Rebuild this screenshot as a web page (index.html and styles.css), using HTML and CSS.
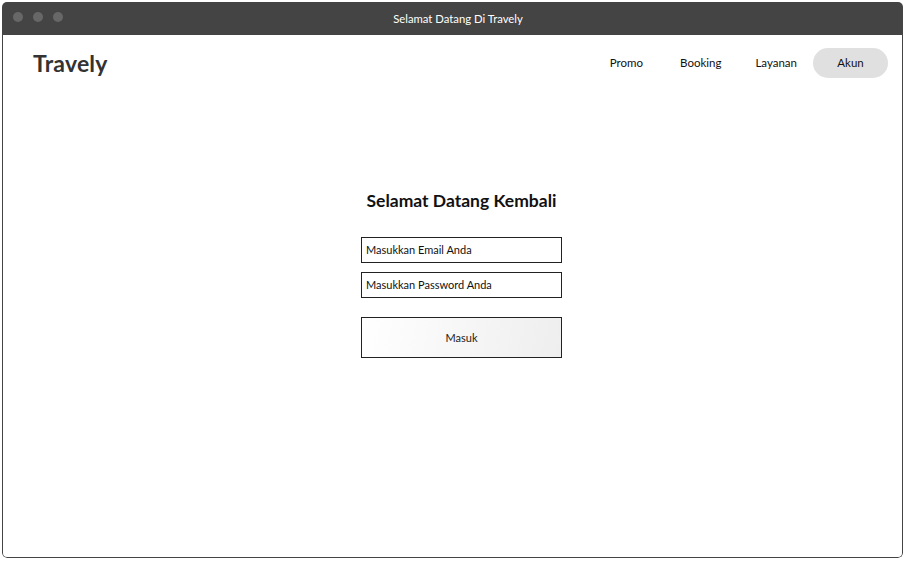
FILE: index.html
```html
<!DOCTYPE html>
<html lang="id">
<head>
<meta charset="utf-8">
<title>Selamat Datang Di Travely</title>
<link rel="stylesheet" href="styles.css">
</head>
<body>
<div class="window">
  <div class="titlebar">
    <div class="dots"><span class="dot"></span><span class="dot"></span><span class="dot"></span></div>
    <div class="title">Selamat Datang Di Travely</div>
  </div>
  <div class="content">
    <header class="header">
      <div class="logo">Travely</div>
      <nav class="nav">
        <a class="nav-link">Promo</a>
        <a class="nav-link">Booking</a>
        <a class="nav-link">Layanan</a>
        <a class="nav-link active">Akun</a>
      </nav>
    </header>
    <main class="main">
      <form class="login">
        <h1 class="heading">Selamat Datang Kembali</h1>
        <div class="field">Masukkan Email Anda</div>
        <div class="field">Masukkan Password Anda</div>
        <div class="btn">Masuk</div>
      </form>
    </main>
  </div>
</div>
</body>
</html>
```
FILE: styles.css
```css
html, body { margin: 0; padding: 0; background: #fff; }
body { font-family: "Lato", "Open Sans", sans-serif; color: #222; }
.window {
  margin: 2px 3px 3px 2px;
  height: 556px;
  display: flex;
  flex-direction: column;
  border-radius: 5px;
  overflow: hidden;
}
.titlebar {
  height: 33px;
  background: #444444;
  position: relative;
  display: flex;
  align-items: center;
  justify-content: center;
  flex: none;
}
.dots { position: absolute; left: 11px; top: 10px; display: flex; gap: 10px; }
.dot { width: 10px; height: 10px; border-radius: 50%; background: #676767; }
.title { color: #fff; font-size: 11.3px; padding-left: 11px; }
.content {
  flex: 1;
  border: 1px solid #444;
  border-top: none;
  border-radius: 0 0 5px 5px;
  display: flex;
  flex-direction: column;
}
.header {
  display: flex;
  align-items: center;
  justify-content: space-between;
  padding: 13px 14px 0 30px;
  height: 30px;
}
.logo { font-size: 23px; font-weight: 700; color: #333; letter-spacing: 0.2px; }
.nav { display: flex; align-items: center; }
.nav-link { font-size: 11.5px; color: #111; line-height: 30px; }
.nav-link:nth-child(1) { margin-right: 37px; }
.nav-link:nth-child(2) { margin-right: 34px; }
.nav-link:nth-child(3) { margin-right: 16px; }
.nav-link.active {
  background: #e0e0e0;
  border-radius: 15px;
  width: 75px;
  text-align: center;
}
.main { display: flex; justify-content: center; padding-left: 18px; padding-top: 112px; }
.login { display: flex; flex-direction: column; align-items: center; width: 201px; }
.heading { margin: 0 0 26px; font-size: 17.5px; font-weight: 700; white-space: nowrap; color: #111; }
.field {
  box-sizing: border-box;
  width: 201px;
  height: 26px;
  border: 1px solid #222;
  font-size: 11px;
  line-height: 24px;
  padding-left: 4px;
  margin-bottom: 9px;
  color: #111;
}
.btn {
  box-sizing: border-box;
  width: 201px;
  height: 41px;
  margin-top: 10px;
  border: 1px solid #222;
  background: linear-gradient(100deg, #ffffff 0%, #eeeeee 100%);
  font-size: 11px;
  display: flex;
  align-items: center;
  justify-content: center;
}
```
